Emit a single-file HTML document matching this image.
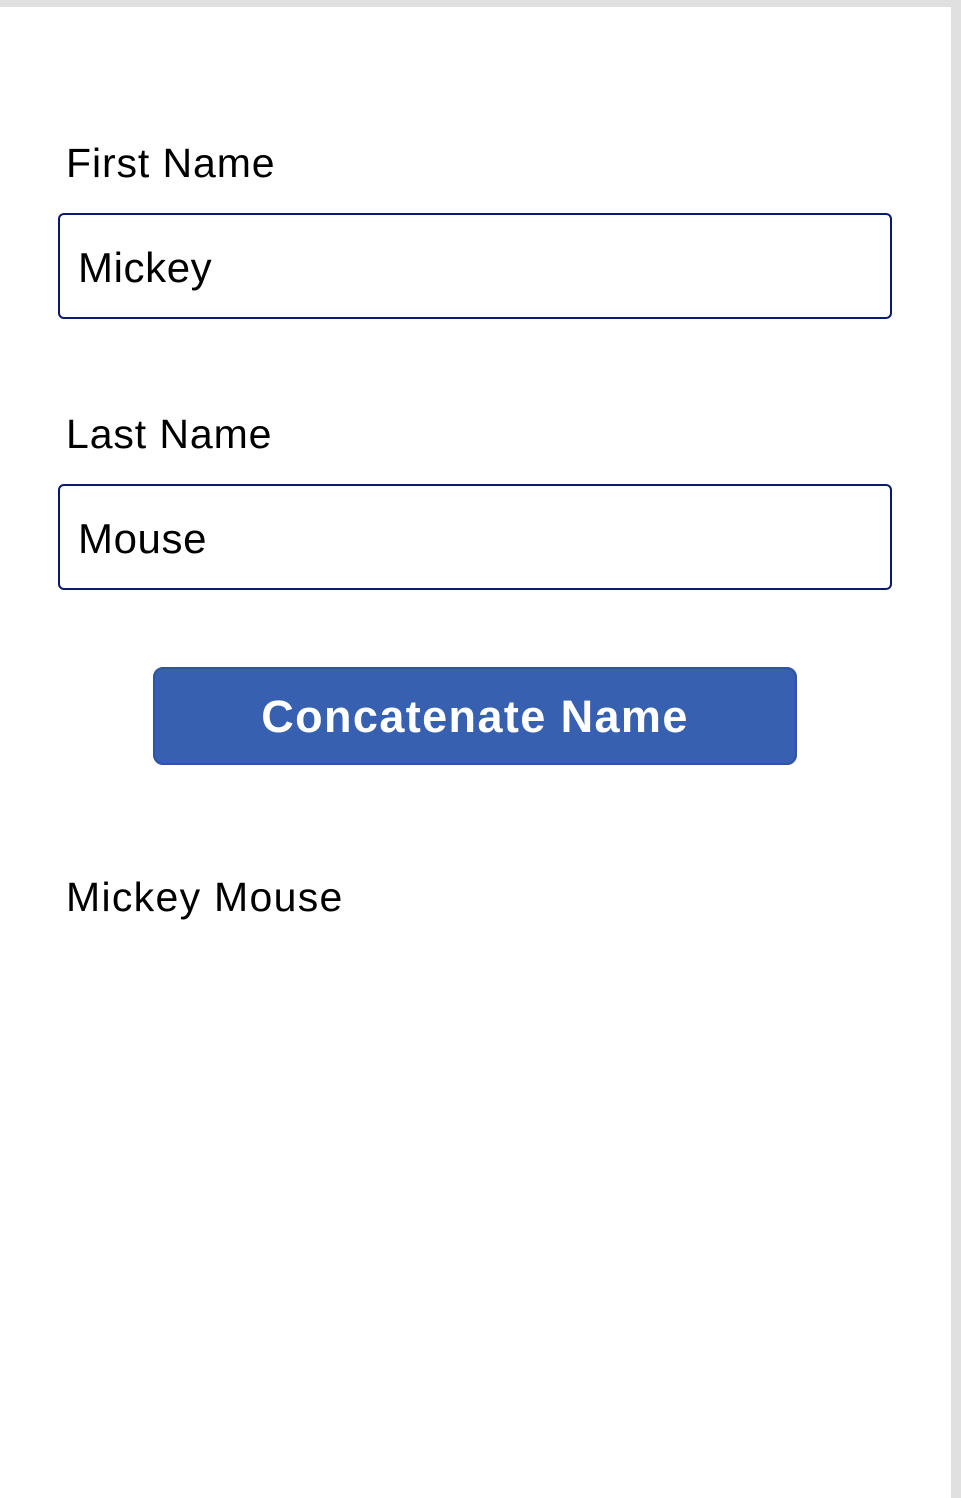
<!DOCTYPE html>
<html><head><meta charset="utf-8"><style>
html,body{margin:0;padding:0;}
body{width:961px;height:1498px;background:#e0e0e0;position:relative;overflow:hidden;font-family:"Liberation Sans",sans-serif;}
.page{position:absolute;left:0;top:7px;width:951px;height:1491px;background:#fff;}
.lbl{position:absolute;left:66px;font-size:41px;color:#000;letter-spacing:0.9px;line-height:1;}
.box{position:absolute;left:58px;width:830px;height:102px;border:2.5px solid #0b1a6e;border-radius:6px;box-sizing:content-box;}
.box span{position:absolute;left:18px;top:32px;font-size:42px;letter-spacing:0.6px;line-height:1;color:#000;}
.btn{position:absolute;left:153px;top:667px;width:640px;height:94px;background:#3760b1;border:2px solid #3054a2;border-radius:10px;color:#fff;font-size:45px;font-weight:bold;text-align:center;line-height:96px;letter-spacing:1.4px;}
</style></head><body>
<div class="page"></div>
<div class="lbl" style="top:143px">First Name</div>
<div class="box" style="top:213px"><span>Mickey</span></div>
<div class="lbl" style="top:414px">Last Name</div>
<div class="box" style="top:484px"><span>Mouse</span></div>
<div class="btn">Concatenate Name</div>
<div class="lbl" style="top:877px;letter-spacing:1.3px">Mickey Mouse</div>
</body></html>
